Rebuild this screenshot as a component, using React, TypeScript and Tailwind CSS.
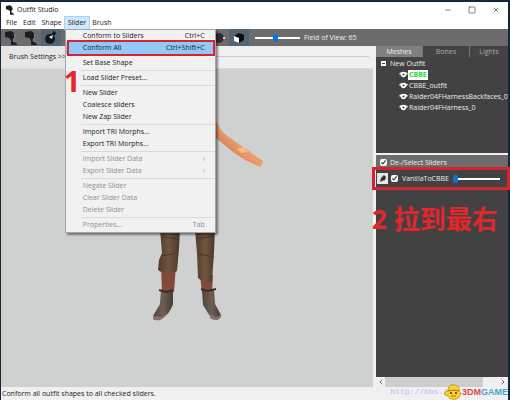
import type { ReactNode } from "react";
import { ChevronLeft, ChevronRight, Minus, Square, X } from "lucide-react";
import { clsx } from "clsx";

type MenuEntry = { label: string; keys?: string; disabled?: boolean; submenu?: boolean; active?: boolean };

const MENU_BAR = ["File", "Edit", "Shape", "Slider", "Brush"];

const SLIDER_MENU: MenuEntry[][] = [
  [
    { label: "Conform to Sliders", keys: "Ctrl+C" },
    { label: "Conform All", keys: "Ctrl+Shift+C", active: true },
  ],
  [{ label: "Set Base Shape" }],
  [{ label: "Load Slider Preset..." }],
  [{ label: "New Slider" }, { label: "Coalesce sliders" }, { label: "New Zap Slider" }],
  [{ label: "Import TRI Morphs..." }, { label: "Export TRI Morphs..." }],
  [
    { label: "Import Slider Data", disabled: true, submenu: true },
    { label: "Export Slider Data", disabled: true, submenu: true },
  ],
  [
    { label: "Negate Slider", disabled: true },
    { label: "Clear Slider Data", disabled: true },
    { label: "Delete Slider", disabled: true },
  ],
  [{ label: "Properties...", keys: "Tab", disabled: true }],
];

const MESHES = ["CBBE", "CBBE_outfit", "Raider04FHarnessBackfaces_0", "Raider04FHarness_0"];

// ── Icons ──────────────────────────────────────────────────────────────────
function BootIcon({ className }: { className?: string }) {
  return (
    <svg viewBox="0 0 12 14" className={className} aria-hidden="true">
      <path d="M0 1 6 0 9 2 10 6 8 9 9 11 12 13 12 14 6 14 6 9 4 7 0 6Z" fill="#1c1d1f" />
      <path d="M9 3 10 6 8 9 9 11" stroke="#8c8f90" strokeWidth="1" fill="none" />
    </svg>
  );
}

function BrushIcon({ className }: { className?: string }) {
  return (
    <svg viewBox="0 0 12 14" className={className} aria-hidden="true">
      <circle cx="5" cy="8" r="5" fill="#12171c" />
      <path d="M7 5 10 1" stroke="#12171c" strokeWidth="3" />
      <path d="M4 6 8 4 7 8Z" fill="#f4f4f4" />
    </svg>
  );
}

function CubeIcon({ className }: { className?: string }) {
  return (
    <svg viewBox="0 0 12 12" className={className} aria-hidden="true">
      <path d="M1 4 6 1 11 3 11 8 6 11 1 9Z" fill="#0c0d0e" />
      <path d="M1 4 6 6 6 11 1 9Z" fill="#ffffff" />
    </svg>
  );
}

function EyeIcon() {
  return (
    <svg viewBox="0 0 9 7" className="h-[7px] w-[9px] shrink-0" aria-hidden="true">
      <path d="M0 3C2 0 7 0 9 3L7 4C7 7 2 7 2 4Z" fill="#fff" />
      <circle cx="4.500" cy="3.500" r="1" fill="#444" />
    </svg>
  );
}

// ── Slider menu ────────────────────────────────────────────────────────────
function MenuItem({ entry }: { entry: MenuEntry }) {
  return (
    <button
      type="button"
      role="menuitem"
      disabled={entry.disabled}
      className={clsx(
        "relative flex h-3 w-full items-center justify-between pr-2 pl-[17px]",
        entry.active && "bg-[#91c9f7]",
        entry.disabled ? "text-[#8f8f8f]" : "text-[#222]",
      )}
    >
      <span>{entry.label}</span>
      {entry.keys && <span className="pr-[2px]">{entry.keys}</span>}
      {entry.submenu && <ChevronRight className="size-[6px]" />}
      {entry.active && <span className="absolute -inset-y-[2px] right-0 left-px border-2 border-[#d8232f]" />}
    </button>
  );
}

function SliderMenu() {
  return (
    <div
      role="menu"
      className="absolute top-full left-0 z-10 w-[151px] border border-[#a5a5a5] bg-[#f1f1f1] pb-px shadow-[2px_2px_2px_#00000070]"
    >
      {SLIDER_MENU.map((group, i) => (
        <div key={group[0].label}>
          {i > 0 && <div className="my-px ml-[15px] h-px bg-[#d9d9d9]" />}
          {group.map((entry) => (
            <MenuItem key={entry.label} entry={entry} />
          ))}
        </div>
      ))}
      <span className="absolute top-7 -left-[2px] font-['Noto_Sans',sans-serif] text-[29px] leading-[46px] font-bold text-[#e3262c]">
        1
      </span>
    </div>
  );
}

// ── Toolbar ────────────────────────────────────────────────────────────────
function ToolButton({ label, active, children }: { label: string; active?: boolean; children: ReactNode }) {
  return (
    <button
      type="button"
      aria-label={label}
      className={clsx("flex h-full w-5 items-center justify-center", active && "bg-[#536473]")}
    >
      {children}
    </button>
  );
}

const RANGE =
  "h-[9px] appearance-none bg-transparent [&::-webkit-slider-runnable-track]:h-[2px] [&::-webkit-slider-runnable-track]:bg-white [&::-webkit-slider-thumb]:-mt-[3px] [&::-webkit-slider-thumb]:h-2 [&::-webkit-slider-thumb]:w-[5px] [&::-webkit-slider-thumb]:appearance-none [&::-webkit-slider-thumb]:rounded-[2px] [&::-webkit-slider-thumb]:bg-[#0b77d5]";

function Toolbar() {
  return (
    <div className="flex h-[17px] items-center bg-[#6c6c6c] text-[#eee]">
      <ToolButton label="Load project">
        <BootIcon className="h-[14px] w-3" />
      </ToolButton>
      <ToolButton label="Load outfit">
        <BootIcon className="h-[14px] w-3" />
      </ToolButton>
      <ToolButton label="Select" active>
        <BrushIcon className="h-[14px] w-3" />
      </ToolButton>
      <div className="w-[148px]" />
      <ToolButton label="Brush collision">
        <svg viewBox="0 0 12 12" className="size-3" aria-hidden="true">
          <circle cx="6" cy="6" r="5" fill="#2f2f2f" />
          <circle cx="11" cy="6" r="1" fill="#fff" />
        </svg>
      </ToolButton>
      <ToolButton label="Perspective" active>
        <CubeIcon className="size-3" />
      </ToolButton>
      <label className="ml-[6px] flex items-center gap-1">
        <input type="range" defaultValue={45} className={clsx(RANGE, "w-[45px]")} />
        Field of View: 65
      </label>
    </div>
  );
}

// ── Viewport ───────────────────────────────────────────────────────────────
function Figure() {
  return (
    <svg viewBox="0 0 160 260" className="absolute top-0 left-[139px] h-[260px] w-[160px]" aria-hidden="true">
      <defs>
        <linearGradient id="skin" x1="0" y1="1" x2="1" y2="0">
          <stop offset="0" stopColor="#b5623f" />
          <stop offset="0.500" stopColor="#ee9c70" />
          <stop offset="1" stopColor="#c9774f" />
        </linearGradient>
        <linearGradient id="pants" x1="0" x2="1">
          <stop offset="0" stopColor="#4e3a2b" />
          <stop offset="0.500" stopColor="#6f563e" />
          <stop offset="1" stopColor="#49372a" />
        </linearGradient>
        <linearGradient id="boots" x1="0" x2="1">
          <stop offset="0" stopColor="#50443a" />
          <stop offset="0.500" stopColor="#6d5f52" />
          <stop offset="1" stopColor="#4a3c34" />
        </linearGradient>
      </defs>
      <path d="M76 51C79 58 82 63 86 66L96 73 106 80 117 88 123 92 122 95 120 98 105 91 93 83 76 69Z" fill="url(#skin)" />
      <path d="M97 80 103 78 108 83 101 84Z" fill="#fbb88a" />
      {/* Left leg */}
      <path d="M21 196H36L34 223H22Z" fill="#84493a" />
      <path d="M20 160H40L39 180 37 202C32 205 23 205 18 201L19 191 22 184Z" fill="url(#pants)" />
      <path d="M22 168 39 170M21 187 37 184" stroke="#49372a" />
      <path d="M21 221 33 221 33 235C30 245 22 252 14 251L13 247 20 235Z" fill="url(#boots)" />
      <path d="M13 247 21 248 27 244C24 251 17 253 13 250Z" fill="#86706a" />
      <path d="M19 221 26 223 33 221" stroke="#3f2c26" strokeWidth="2" fill="none" />
      {/* Right leg */}
      <path d="M60 206H73L72 224H62Z" fill="#84493a" />
      <path d="M55 160H75L74 183 72 212C68 215 62 213 58 209L57 184Z" fill="url(#pants)" />
      <path d="M56 170 74 167M58 185 74 188" stroke="#49372a" />
      <path d="M62 221 74 221 75 235 81 246C81 251 75 252 71 249L63 236Z" fill="url(#boots)" />
      <path d="M70 245 76 248 81 246C81 252 74 252 70 249Z" fill="#86706a" />
      <path d="M61 220 68 222 76 220" stroke="#3f2c26" strokeWidth="2" fill="none" />
    </svg>
  );
}

// ── Side panel ─────────────────────────────────────────────────────────────
function SidePanel() {
  return (
    <aside className="flex w-[132px] shrink-0 flex-col text-[#eee]">
      <div role="tablist" className="flex h-[11px] gap-px bg-[#777]">
        <button type="button" role="tab" aria-selected="true" className="w-[46px] bg-[#808080]">
          Meshes
        </button>
        <button type="button" role="tab" aria-selected="false" className="w-[46px] bg-[#444] text-[#aaa]">
          Bones
        </button>
        <button type="button" role="tab" aria-selected="false" className="flex-1 bg-[#444] text-[#aaa]">
          Lights
        </button>
      </div>

      <div className="h-24 bg-[#424242] pt-px pl-[5px]">
        <div className="flex h-[11px] items-center gap-1">
          <span className="flex size-[5px] items-center justify-center bg-white">
            <span className="h-px w-[3px] bg-[#444]" />
          </span>
          New Outfit
        </div>
        <ul className="pl-[18px]">
          {MESHES.map((name, i) => (
            <li key={name} className="flex h-[11px] items-center">
              <EyeIcon />
              <span className={clsx("px-px", i === 0 && "bg-white font-bold text-[#29e02e]")}>{name}</span>
            </li>
          ))}
        </ul>
      </div>

      <div className="flex flex-1 flex-col border-t-2 border-[#f0f0f0] bg-[#424242]">
        <label className="flex h-[13px] items-end gap-[3px] bg-[#6c6c6c] pl-1">
          <input type="checkbox" defaultChecked className="mb-[2px] size-[7px] accent-white" />
          De-/Select Sliders
        </label>
        <div className="relative flex h-[21px] items-center pl-px">
          <button type="button" aria-label="Edit slider" className="flex size-[11px] items-center justify-center bg-[#e6e6e6]">
            <svg viewBox="0 0 8 8" className="size-2" aria-hidden="true">
              <path d="M1 7 2 3 5 0 7 2 6 5 3 6Z" fill="#333" />
            </svg>
          </button>
          <label className="flex items-center gap-1 pl-[3px]">
            <input type="checkbox" defaultChecked className="size-[7px] accent-white" />
            VanillaToCBBE
          </label>
          <input type="range" defaultValue={0} aria-label="VanillaToCBBE amount" className={clsx(RANGE, "mr-2 ml-auto w-[47px]")} />
          <span className="pointer-events-none absolute -top-px -right-[2px] -bottom-px -left-1 border-[3px] border-[#d8232f]" />
          <span className="absolute top-9 -left-1 font-['Noto_Sans','Noto_Sans_CJK_SC',sans-serif] text-[26px] leading-[30px] font-bold whitespace-nowrap text-[#e3262c]">
            2 拉到最右
          </span>
        </div>
      </div>

      <div className="flex h-[10px] items-center justify-between bg-[#f0f0f0] px-px text-[#333]">
        <ChevronLeft className="size-2" />
        <span className="mr-4 h-full flex-1 bg-[#cdcdcd]" />
        <ChevronRight className="size-2" />
      </div>
    </aside>
  );
}

function Watermark() {
  return (
    <div className="absolute right-0 bottom-0 flex items-center font-['Liberation_Sans',sans-serif] leading-[14px]">
      <span className="font-['Liberation_Mono',monospace] text-[8px] text-[#c6b6ee]">http://bbs.3</span>
      <svg viewBox="0 0 18 16" className="-ml-1 h-4 w-[18px]" aria-hidden="true">
        <path d="M4 7C4 2 7 0 10 1 14 1 16 4 15 7 18 9 16 14 12 15 8 16 4 14 4 12L0 10 1 8Z" fill="#f7d232" stroke="#c39a22" />
        <path d="M4 7C7 6 11 6 15 7" stroke="#a87910" fill="none" />
        <circle cx="7" cy="9" r="1" fill="#4a3609" />
        <circle cx="12" cy="9" r="1" fill="#4a3609" />
        <path d="M7 12H12" stroke="#e59a22" strokeWidth="2" />
      </svg>
      <span className="text-[9px] font-bold text-[#e2483d]">3DM</span>
      <span className="text-[9px] font-bold text-[#49a3cf]">GAME</span>
    </div>
  );
}

export default function App() {
  return (
    <div className="flex min-h-screen flex-col border-t-2 border-r-2 border-l border-[#16273b] bg-white font-['Open_Sans','Noto_Sans',sans-serif] text-[7px] leading-[10px] text-[#222]">
      <header className="flex h-[15px] items-center pl-[5px]">
        <BootIcon className="h-[10px] w-[8px]" />
        <h1 className="flex-1 pl-[3px]">Outfit Studio</h1>
        <div className="flex gap-4 pr-2 text-[#444]">
          <button type="button" aria-label="Minimize"><Minus className="size-2" /></button>
          <button type="button" aria-label="Maximize"><Square className="size-2" /></button>
          <button type="button" aria-label="Close"><X className="size-2" /></button>
        </div>
      </header>

      <nav className="flex h-3 items-stretch pl-[2px]">
        {MENU_BAR.map((name) => (
          <div key={name} className="relative">
            <button
              type="button"
              className={clsx("h-full px-[3px]", name === "Slider" && "bg-[#cce8ff] outline outline-[#a6d3f5]")}
            >
              {name}
            </button>
            {name === "Slider" && <SliderMenu />}
          </div>
        ))}
      </nav>

      <Toolbar />

      <main className="flex flex-1">
        <section className="flex min-w-0 flex-1 flex-col">
          <div className="flex h-[23px] items-center border-b border-[#ddd] bg-[#f0f0f0]">
            <button type="button" className="h-full border-r border-[#ccc] bg-[#e6e6e6] px-2">
              Brush Settings &gt;&gt;
            </button>
            <span className="mr-1 h-[11px] flex-1 self-start border-b border-[#ccc]" />
          </div>
          <div className="relative flex-1 overflow-hidden bg-[#ced1d0]">
            <Figure />
          </div>
        </section>
        <div className="w-[3px] bg-[#f0f0f0]" />
        <SidePanel />
      </main>

      <footer className="relative flex h-[13px] items-center bg-[#f0f0f0] pl-px">
        Conform all outfit shapes to all checked sliders.
        <Watermark />
      </footer>
    </div>
  );
}
